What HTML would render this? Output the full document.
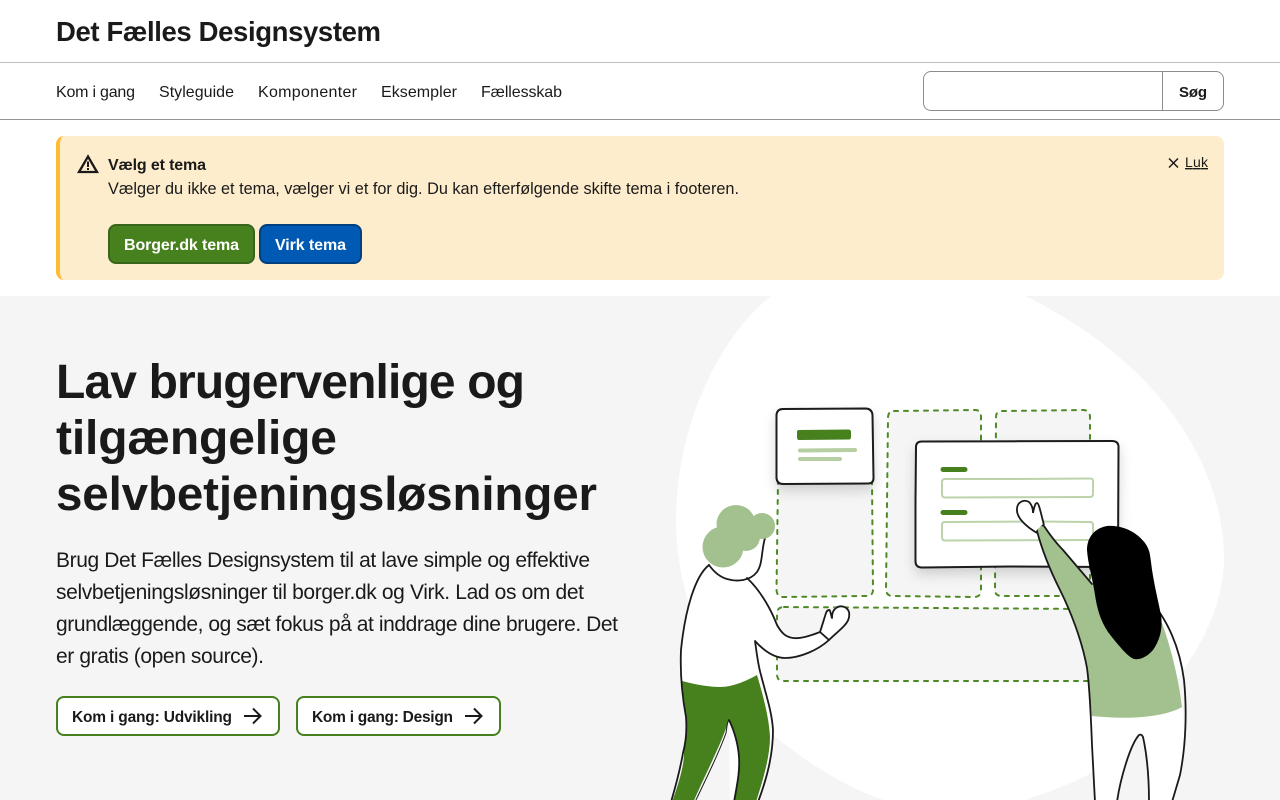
<!DOCTYPE html>
<html lang="da">
<head>
<meta charset="utf-8">
<title>Det Fælles Designsystem</title>
<style>
html,body{margin:0;padding:0;width:1280px;height:800px;overflow:hidden;background:#fff;}
#page{position:relative;width:1280px;height:800px;overflow:hidden;font-family:"Liberation Sans",sans-serif;}
.box{position:absolute;box-sizing:border-box;}
svg{position:absolute;left:0;top:0;}
text{font-family:"Liberation Sans",sans-serif;fill:#1a1a1a;}
.b{font-weight:700;}
</style>
</head>
<body>
<div id="page">
  <div class="box" style="left:0;top:62px;width:1280px;height:1px;background:#bfbfbf"></div>
  <div class="box" style="left:0;top:119px;width:1280px;height:1px;background:#949494"></div>
  <div class="box" style="left:923px;top:71px;width:301px;height:40px;border:1px solid #8c8c8c;border-radius:8px;background:#fff"></div>
  <div class="box" style="left:1162px;top:71px;width:1px;height:40px;background:#8c8c8c"></div>
  <div class="box" style="left:56px;top:136px;width:1168px;height:144px;background:#feedcc;border-left:4px solid #ffbb33;border-radius:8px"></div>
  <div class="box" style="left:108px;top:224px;width:147px;height:40px;background:#47811e;border:2px solid #38651a;border-radius:8px"></div>
  <div class="box" style="left:259px;top:224px;width:103px;height:40px;background:#0059b3;border:2px solid #004080;border-radius:8px"></div>
  <div class="box" style="left:0;top:296px;width:1280px;height:504px;background:#f5f5f5"></div>
  <div class="box" style="left:56px;top:696px;width:224px;height:40px;background:#fff;border:2px solid #47811e;border-radius:8px"></div>
  <div class="box" style="left:296px;top:696px;width:205px;height:40px;background:#fff;border:2px solid #47811e;border-radius:8px"></div>

  <svg width="1280" height="800" viewBox="0 0 1280 800" xmlns="http://www.w3.org/2000/svg">
    <defs>
      <clipPath id="hero"><rect x="0" y="296" width="1280" height="504"/></clipPath>
      <filter id="sh" x="-20%" y="-20%" width="140%" height="150%"><feDropShadow dx="0" dy="6" stdDeviation="6" flood-color="#000" flood-opacity=".16"/></filter>
    </defs>

    <text class="b" x="56" y="41" font-size="27.500" textLength="325">Det Fælles Designsystem</text>
    <text x="56" y="97" font-size="16" textLength="79">Kom i gang</text>
    <text x="159" y="97" font-size="16" textLength="75">Styleguide</text>
    <text x="258" y="97" font-size="16" textLength="99">Komponenter</text>
    <text x="381" y="97" font-size="16" textLength="76">Eksempler</text>
    <text x="481" y="97" font-size="16" textLength="81">Fællesskab</text>
    <text class="b" x="1179" y="97" font-size="15" textLength="28">Søg</text>

    <path d="M88 156.500L97 172H79Z" fill="none" stroke="#1a1a1a" stroke-width="2.300" stroke-linejoin="miter"/>
    <path d="M88 161.500v5.500" stroke="#1a1a1a" stroke-width="2"/><path d="M88 168v2" stroke="#1a1a1a" stroke-width="2"/>
    <text class="b" x="108" y="170" font-size="16" textLength="98">Vælg et tema</text>
    <text x="108" y="194" font-size="16.300" textLength="631">Vælger du ikke et tema, vælger vi et for dig. Du kan efterfølgende skifte tema i footeren.</text>
    <path d="M1169 158.500L1178 167.500M1178 158.500L1169 167.500" stroke="#1a1a1a" stroke-width="1.500" fill="none"/>
    <text x="1185" y="167" font-size="14" textLength="23" text-decoration="underline">Luk</text>
    <text class="b" x="124" y="250" font-size="16" textLength="115" style="fill:#fff">Borger.dk tema</text>
    <text class="b" x="275" y="250" font-size="16" textLength="71" style="fill:#fff">Virk tema</text>

    <text class="b" x="56" y="398" font-size="48" textLength="469">Lav brugervenlige og</text>
    <text class="b" x="56" y="454" font-size="48" textLength="281">tilgængelige</text>
    <text class="b" x="56" y="510" font-size="47.500" textLength="541">selvbetjeningsløsninger</text>
    <text x="56" y="567" font-size="21" textLength="534">Brug Det Fælles Designsystem til at lave simple og effektive</text>
    <text x="56" y="599" font-size="21" textLength="528">selvbetjeningsløsninger til borger.dk og Virk. Lad os om det</text>
    <text x="56" y="631" font-size="21" textLength="562">grundlæggende, og sæt fokus på at inddrage dine brugere. Det</text>
    <text x="56" y="663" font-size="21" textLength="208">er gratis (open source).</text>

    <text class="b" x="72" y="722" font-size="15.500" textLength="160">Kom i gang: Udvikling</text>
    <path d="M244 716H260M253 708.500L260.500 716L253 723.500" fill="none" stroke="#1a1a1a" stroke-width="2"/>
    <text class="b" x="312" y="722" font-size="15.500" textLength="141">Kom i gang: Design</text>
    <path d="M465 716H481M474 708.500L481.500 716L474 723.500" fill="none" stroke="#1a1a1a" stroke-width="2"/>

    <g clip-path="url(#hero)">
      <!-- blob -->
      <path fill="#fff" d="M771 296C716 340 676 430 676 520C676 600 715 690 773 735C810 765 850 790 890 802L1020 802C1045 793 1070 785 1093 772C1130 755 1165 700 1193 655C1212 625 1224 590 1224 560C1224 495 1195 437 1153 390C1115 348 1070 318 1025 296Z"/>

      <!-- dashed boxes -->
      <g fill="#f5f5f5" stroke="#4f8a27" stroke-width="2" stroke-dasharray="4 6" stroke-linecap="round">
        <path d="M778 480L776.500 590Q777 597 783 597L866 596Q873 596 873 590L872 480Z"/>
        <path d="M894 411L975 410Q981 410 981 417L981 590Q981 597 974 597L893 596Q886 596 886 589L888 418Q888 411 894 411Z"/>
        <path d="M1002 411L1084 410Q1090 411 1090 417L1090 590Q1090 596 1084 596L1002 596Q995 596 995 590L996 417Q996 411 1002 411Z"/>
        <path d="M784 607L1090 609L1090 681L783 681Q777 681 777 674L777 614Q777 607 784 607Z"/>
      </g>

      <!-- small card -->
      <path filter="url(#sh)" fill="#fff" stroke="#1a1a1a" stroke-width="2" d="M783 409L866 408.500Q872 409 872.500 415L873.500 478Q873.500 483.500 868 483.500L783 484Q777 484 776.500 478L776.500 415Q777 409 783 409Z"/>
      <path fill="#47811e" d="M799 430L849 429.500Q851 430 851 432V437Q851 439.500 849 439.500L799 440Q797 440 797 437V432Q797 430 799 430Z"/>
      <path d="M800 450.500L855 450M800 459L840 459" stroke="#b5cfa3" stroke-width="4" stroke-linecap="round" fill="none"/>

      <!-- large card -->
      <path filter="url(#sh)" fill="#fff" stroke="#1a1a1a" stroke-width="2" d="M922 441.500L1112 441Q1118.500 441 1118.500 447L1118 561Q1118 567 1112 567L1010 566.500L922 567.500Q915.500 567.500 915.500 561L915.500 500L916 447Q916 441.500 922 441.500Z"/>
      <path d="M943 469.500H965M943 512.500H965" stroke="#47811e" stroke-width="5" stroke-linecap="round" fill="none"/>
      <g fill="none" stroke="#bcd3ab" stroke-width="2">
        <path d="M945 479L1020 479L1090 478.500Q1093 478.500 1093 481L1093 494Q1093 497 1090 497L945 497.500Q942 497.500 942 494L942 482Q942 479 945 479Z"/>
        <path d="M945 522L1040 521.500L1090 522Q1093 522 1093 525L1093 537Q1093 540 1090 540L945 540.500Q942 540.500 942 537L942 525Q942 522 945 522Z"/>
      </g>

      <!-- left person -->
      <path fill="#fff" d="M709 565C695 576 685 610 681 650C680 665 681 675 682 681L757 675L755 641C765 652 775 658 785 658C800 658 818 650 829 640L843 627C848 622 850 618 849 612C847 606 840 604 834 608L832 618L830 609C826 611 825 616 820 632C810 636 800 639 793 638C785 637 781 632 777 625C772 612 762 592 747 578C755 575 760 570 761 560L765 538L709 560Z"/>
      <path fill="#fff" d="M758 673C765 695 773 715 773 730C773 755 766 778 758 802L730 802L729 719L682 681Z"/>
      <path fill="#47811e" d="M682 681C697 685 710 687 720 687C733 687 746 681 757 675C763 695 769 717 770 737C770 757 763 780 755 805L734 805C737 785 740 770 739 757C738 742 733 728 729 719C727 725 726 728 725 731C718 750 705 775 692 805L671 805C680 780 684 765 684 753C686 735 687 725 686 717C685 705 683 693 682 681Z"/>
      <path fill="#f5f5f5" d="M0 0"/>
      <g fill="none" stroke="#1a1a1a" stroke-width="1.800" stroke-linecap="round" stroke-linejoin="round">
        <path d="M709 565C695 576 685 610 681 650C680 672 682 695 686 717C687 730 686 742 683 753C680 770 676 785 671 802"/>
        <path d="M709 565C714 572 720 577 727 579C737 582 750 581 757 572C763 563 761 552 765 538"/>
        <path d="M747 578C762 592 772 612 777 625C781 632 785 637 793 638C800 639 810 636 820 632L829 640C818 650 800 658 785 658C775 658 765 652 755 641C757 655 758 665 761 675C766 695 772 712 773 730C773 755 767 778 758 802"/>
        <path d="M820 632C822 626 825 616 826 613C827 610 830 609 830 611C831 613 831 616 832 618C832 614 833 610 836 608C840 605 847 606 849 612C850 618 848 622 843 627C838 632 833 636 829 640"/>
        <path d="M729 720C733 728 738 742 739 757C740 772 737 785 734 802"/>
        <path d="M729 720C727 722 727 727 726 733C720 750 708 775 695 802" stroke-width="1"/>
      </g>
      <!-- hair left -->
      <g fill="#a3c08f">
        <circle cx="723" cy="547" r="20.500"/>
        <ellipse cx="736" cy="524" rx="19.500" ry="19"/>
        <circle cx="762" cy="526" r="13"/>
        <circle cx="746" cy="537" r="14"/>
      </g>

      <!-- right person -->
      <path fill="#fff" d="M1092 712L1182 700L1185 745C1184 765 1178 785 1172 805L1149 805C1149 780 1146 750 1140 735C1130 745 1120 780 1117 805L1095 805C1094 775 1093 745 1092 712Z"/>
      <path fill="#a3c08f" d="M1037 531C1037 526 1041 524 1044 526C1050 535 1055 542 1063 550L1092 584L1162 623C1170 645 1178 675 1182 707C1165 717 1130 720 1092 716C1090 700 1089 680 1087 668C1082 640 1070 610 1060 590C1050 570 1042 550 1037 531Z"/>
      <g fill="none" stroke="#1a1a1a" stroke-width="1.800" stroke-linecap="round" stroke-linejoin="round">
        <path d="M1037 531C1037 526 1041 524 1044 526C1050 535 1055 542 1063 550L1092 584"/>
        <path d="M1037 531C1042 550 1050 570 1060 590C1070 610 1082 640 1087 668C1090 690 1091 720 1092 745L1095 802"/>
        <path d="M1160 613C1170 628 1180 650 1184 680C1187 710 1186 745 1180 775L1172 802"/>
        <path d="M1117 802C1120 780 1130 745 1139 735C1141 734 1142 735 1143 737C1147 755 1149 780 1149 802"/>
      </g>
      <path fill="#fff" d="M1036 531C1027 526 1017 517 1018 509C1018 503 1024 500 1028 503C1031 505 1032 509 1033 515C1034 510 1035 505 1037 504C1039 506 1041 515 1043 524Z"/>
      <path fill="none" stroke="#1a1a1a" stroke-width="1.800" d="M1037 533C1027 527 1016 518 1017 509C1017 502 1024 499 1029 502C1032 505 1033 508 1033 513C1034 508 1035 503 1037 503C1039 503 1041 514 1044 525"/>
      <path fill="#000" d="M1107 526C1120 525 1135 530 1145 543C1150 550 1150 555 1151 562C1153 580 1158 600 1161 615C1163 628 1160 640 1153 650C1147 657 1140 660 1134 659C1128 657 1118 645 1108 632C1100 620 1097 608 1095 595C1093 580 1088 565 1087 550C1087 537 1095 528 1107 526Z"/>
    </g>
  </svg>
</div>
</body>
</html>
